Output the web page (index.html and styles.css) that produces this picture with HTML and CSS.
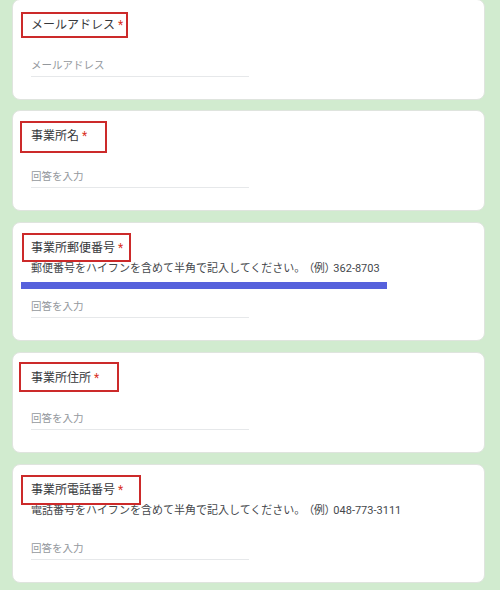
FILE: index.html
```html
<!DOCTYPE html>
<html lang="ja">
<head>
<meta charset="utf-8">
<title>フォーム</title>
<link rel="stylesheet" href="styles.css">
</head>
<body>
<main class="form">
  <section class="card card-first">
    <div class="title">メールアドレス<span class="req">*</span></div>
    <div class="input">メールアドレス</div>
    <span class="mark mark-1"></span>
  </section>
  <section class="card">
    <div class="title">事業所名<span class="req">*</span></div>
    <div class="input">回答を入力</div>
    <span class="mark mark-2"></span>
  </section>
  <section class="card">
    <div class="title">事業所郵便番号<span class="req">*</span></div>
    <div class="desc">郵便番号をハイフンを含めて半角で記入してください。<span class="paren">（例）</span>362-8703</div>
    <div class="input input-after-desc">回答を入力</div>
    <span class="mark mark-3"></span>
    <span class="bar"></span>
  </section>
  <section class="card">
    <div class="title">事業所住所<span class="req">*</span></div>
    <div class="input">回答を入力</div>
    <span class="mark mark-4"></span>
  </section>
  <section class="card">
    <div class="title">事業所電話番号<span class="req">*</span></div>
    <div class="desc">電話番号をハイフンを含めて半角で記入してください。<span class="paren">（例）</span>048-773-3111</div>
    <div class="input input-after-desc">回答を入力</div>
    <span class="mark mark-5"></span>
  </section>
</main>
</body>
</html>
```
FILE: styles.css
```css
html, body {
  margin: 0;
  padding: 0;
  background: #d1ebcf;
}
body {
  width: 500px;
  height: 590px;
  overflow: hidden;
  font-family: Roboto, "Noto Sans CJK JP", sans-serif;
}
.form {
  display: flex;
  flex-direction: column;
  gap: 11px;
  margin: -1px 15px 0 12px;
}
.card {
  position: relative;
  background: #fff;
  border: 1px solid #dfe4de;
  border-radius: 8px;
  padding: 16px 18px 22px;
}
.card-first {
  margin-bottom: -1px;
}
.title {
  font-size: 12px;
  line-height: 18px;
  color: #36383b;
}
.req {
  color: #d93025;
  margin-left: 3px;
}
.desc {
  margin-top: 4px;
  font-size: 11px;
  line-height: 15px;
  color: #45484c;
  white-space: nowrap;
}
.paren {
  font-feature-settings: "palt";
  margin: 0 3px;
}
.input {
  margin-top: 24px;
  width: 218px;
  font-size: 10.5px;
  line-height: 16px;
  color: #94989d;
  padding-bottom: 2px;
  border-bottom: 1px solid #e6e8ea;
}
.input-after-desc {
  margin-top: 23px;
}
.mark {
  position: absolute;
  border: 2px solid #cc2a2a;
  box-sizing: border-box;
}
.mark-1 { left: 8px; top: 12px; width: 107px; height: 26px; }
.mark-2 { left: 7px; top: 10px; width: 87px; height: 32px; }
.mark-3 { left: 9px; top: 10px; width: 109px; height: 29px; }
.mark-4 { left: 6px; top: 9px; width: 100px; height: 30px; }
.mark-5 { left: 8px; top: 10px; width: 120px; height: 30px; }
.bar {
  position: absolute;
  left: 8px;
  top: 59px;
  width: 366px;
  height: 7px;
  background: #5661dc;
}
```
